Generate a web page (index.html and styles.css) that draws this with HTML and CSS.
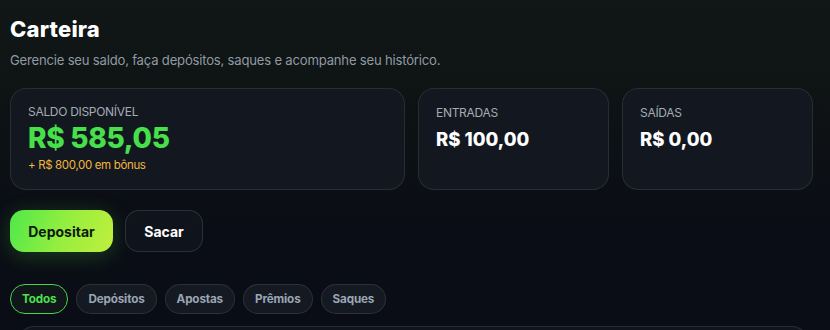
FILE: index.html
```html
<!DOCTYPE html>
<html lang="pt-BR">
<head>
    <meta charset="UTF-8">
    <meta name="viewport" content="width=device-width, initial-scale=1.0">
    <title>Carteira</title>
    <link rel="stylesheet" href="styles.css">
</head>
<body>
    <div class="page">
        <!-- cabeçalho -->
        <h1 class="title">Carteira</h1>
        <p class="subtitle">Gerencie seu saldo, faça depósitos, saques e acompanhe seu histórico.</p>

        <!-- resumo -->
        <div class="stats">
            <div class="card card-main">
                <div class="card-label">SALDO DISPONÍVEL</div>
                <div class="card-value green">R$ 585,05</div>
                <div class="bonus">+ R$ 800,00 em bônus</div>
            </div>
            <div class="card">
                <div class="card-label">ENTRADAS</div>
                <div class="card-value small">R$ 100,00</div>
            </div>
            <div class="card">
                <div class="card-label">SAÍDAS</div>
                <div class="card-value small">R$ 0,00</div>
            </div>
        </div>

        <!-- ações -->
        <div class="actions">
            <button class="btn btn-primary">Depositar</button>
            <button class="btn btn-outline">Sacar</button>
        </div>

        <!-- filtros -->
        <div class="filters">
            <button class="chip active">Todos</button>
            <button class="chip">Depósitos</button>
            <button class="chip">Apostas</button>
            <button class="chip">Prêmios</button>
            <button class="chip">Saques</button>
        </div>

        <div class="history"></div>
    </div>
</body>
</html>
```

FILE: styles.css
```css
* {
    box-sizing: border-box;
}
html, body {
    height: 100%;
}
body {
    margin: 0;
    font-family: Inter, "Liberation Sans", sans-serif;
    color: #fff;
    background: linear-gradient(180deg, #111716 0%, #0e1214 35%, #0a0d15 70%, #0a0d15 100%);
    overflow: hidden;
}
.page {
    height: 100%;
    overflow: hidden;
    padding: 14px 17px 0 10px;
}
.title {
    margin: 0;
    font-size: 22px;
    font-weight: 800;
    letter-spacing: 0.2px;
    line-height: 30px;
}
.subtitle {
    margin: 7px 0 0;
    font-size: 13.1px;
    letter-spacing: -0.2px;
    color: #8f9aa3;
    line-height: 18px;
}

/* cartões de resumo */
.stats {
    display: grid;
    grid-template-columns: repeat(4, 1fr);
    gap: 13px;
    margin-top: 19px;
}
.card {
    height: 102px;
    padding: 17px 17px;
    border-radius: 16px;
    border: 1px solid rgba(255, 255, 255, 0.09);
    background: #131820;
}
.card-main {
    grid-column: span 2;
    padding-top: 16px;
}
.card-label {
    font-size: 12px;
    color: #a4abb3;
    letter-spacing: -0.3px;
    line-height: 14px;
}
.card-value {
    font-weight: 800;
    line-height: 24px;
    margin-top: 7px;
}
.card-value.green {
    font-size: 28px;
    line-height: 30px;
    margin-top: 4px;
    color: #47e04b;
    letter-spacing: -0.3px;
}
.card-value.small {
    font-size: 18.5px;
    color: #fff;
}
.bonus {
    margin-top: 5px;
    font-size: 11.5px;
    color: #f2b63d;
    letter-spacing: -0.35px;
}

/* botões */
.actions {
    display: flex;
    gap: 12px;
    margin-top: 20px;
}
.btn {
    height: 42px;
    border-radius: 14px;
    font-family: inherit;
    font-size: 14px;
    font-weight: 700;
    cursor: pointer;
}
.btn-primary {
    width: 103px;
    border: none;
    color: #0e1a0c;
    background: linear-gradient(110deg, #4fe84a 0%, #93ee3f 50%, #c1ef3d 100%);
    box-shadow: 0 4px 22px rgba(90, 230, 70, 0.22);
}
.btn-outline {
    width: 78px;
    color: #fff;
    background: #0f131b;
    border: 1px solid rgba(255, 255, 255, 0.12);
}

/* filtros */
.filters {
    display: flex;
    gap: 8px;
    margin-top: 32px;
}
.chip {
    height: 30px;
    padding: 0 11px;
    border-radius: 15px;
    font-family: inherit;
    font-size: 11.7px;
    letter-spacing: -0.15px;
    font-weight: 700;
    color: #9aa5b4;
    background: #151a22;
    border: 1px solid rgba(255, 255, 255, 0.1);
    cursor: pointer;
}
.chip.active {
    color: #4be04e;
    background: #10161a;
    border-color: #45d64a;
}

.history {
    margin: 12px 5px 0 8px;
    height: 80px;
    border-radius: 16px;
    border: 1px solid rgba(255, 255, 255, 0.1);
    background: #10141c;
}
```
